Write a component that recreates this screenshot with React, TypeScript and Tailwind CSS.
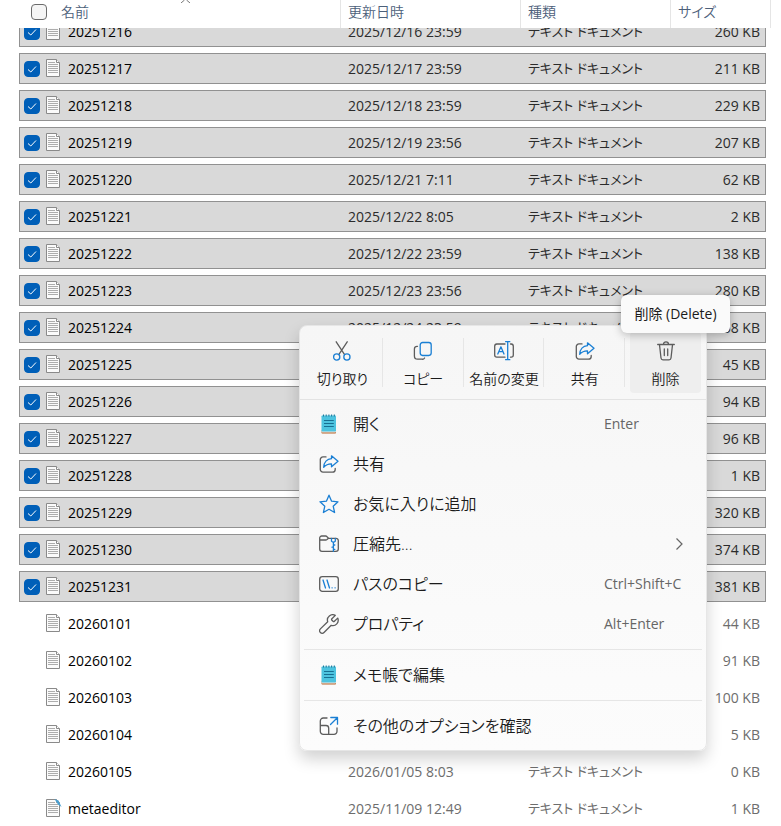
import type { ReactNode } from 'react';

type FileRow = {
  name: string;
  date?: string;
  size: string;
  selected?: boolean;
  script?: boolean;
};

const files: FileRow[] = [
  { name: '20251216', date: '2025/12/16 23:59', size: '260 KB', selected: true },
  { name: '20251217', date: '2025/12/17 23:59', size: '211 KB', selected: true },
  { name: '20251218', date: '2025/12/18 23:59', size: '229 KB', selected: true },
  { name: '20251219', date: '2025/12/19 23:56', size: '207 KB', selected: true },
  { name: '20251220', date: '2025/12/21 7:11', size: '62 KB', selected: true },
  { name: '20251221', date: '2025/12/22 8:05', size: '2 KB', selected: true },
  { name: '20251222', date: '2025/12/22 23:59', size: '138 KB', selected: true },
  { name: '20251223', date: '2025/12/23 23:56', size: '280 KB', selected: true },
  { name: '20251224', date: '2025/12/24 23:59', size: '268 KB', selected: true },
  { name: '20251225', size: '45 KB', selected: true },
  { name: '20251226', size: '94 KB', selected: true },
  { name: '20251227', size: '96 KB', selected: true },
  { name: '20251228', size: '1 KB', selected: true },
  { name: '20251229', size: '320 KB', selected: true },
  { name: '20251230', size: '374 KB', selected: true },
  { name: '20251231', size: '381 KB', selected: true },
  { name: '20260101', size: '44 KB' },
  { name: '20260102', size: '91 KB' },
  { name: '20260103', size: '100 KB' },
  { name: '20260104', size: '5 KB' },
  { name: '20260105', date: '2026/01/05 8:03', size: '0 KB' },
  { name: 'metaeditor', date: '2025/11/09 12:49', size: '1 KB', script: true },
];

const GRAY = '#5c5c5c';
const BLUE = '#1a7fd4';

function Icon({ children }: { children: ReactNode }) {
  return (
    <svg
      className="size-5 shrink-0"
      viewBox="0 0 20 20"
      fill="none"
      stroke={GRAY}
      strokeWidth="1.3"
      strokeLinecap="round"
      strokeLinejoin="round"
      aria-hidden="true"
    >
      {children}
    </svg>
  );
}

function CutIcon() {
  return (
    <Icon>
      <path d="M4.2 0.8 12.6 13.6M15.2 0.8 6.8 13.6" />
      <circle cx="4.7" cy="16" r="3.1" stroke={BLUE} />
      <circle cx="14.9" cy="16" r="3.1" stroke={BLUE} />
    </Icon>
  );
}

function CopyIcon() {
  return (
    <Icon>
      <path d="M4.5 5.3H4A2.6 2.6 0 0 0 1.4 7.9V15A3.2 3.2 0 0 0 4.6 18.2H9A2.6 2.6 0 0 0 11.6 17" />
      <rect x="7.2" y="1.5" width="11" height="13" rx="2.4" stroke={BLUE} />
    </Icon>
  );
}

function RenameIcon() {
  return (
    <Icon>
      <path d="M11 3H2.8A2.2 2.2 0 0 0 .7 5.2V14A2.2 2.2 0 0 0 2.8 16.2H11M16.5 3H17.2A2.2 2.2 0 0 1 19.3 5.2V14A2.2 2.2 0 0 1 17.2 16.2H16.5" />
      <path d="M3.8 13 6.9 5.8 10 13M4.9 10.7H8.9M13.7 .8V18.6M11.6 .7H15.8M11.6 18.7H15.8" stroke={BLUE} />
    </Icon>
  );
}

function ShareIcon() {
  return (
    <Icon>
      <path d="M7 2.9H4A2.7 2.7 0 0 0 1.3 5.6V15.4A2.7 2.7 0 0 0 4 18.1H13.5A2.7 2.7 0 0 0 16.2 15.4V14.4" />
      <path d="M12.5 1.8 19 7.3 12.5 12.8V9.9C9 9.8 6.7 11 4.7 13.2 5 8.5 7.9 5 12.5 4.7Z" stroke={BLUE} />
    </Icon>
  );
}

function TrashIcon() {
  return (
    <Icon>
      <path d="M1.7 3.5H18.3M7.5 3.3A2.5 2.5 0 0 1 12.5 3.3M3.5 3.7 5 17A2 2 0 0 0 7 18.8H13A2 2 0 0 0 15 17L16.5 3.7M8.3 8V14.5M11.7 8V14.5" />
    </Icon>
  );
}

function StarIcon() {
  return (
    <Icon>
      <path d="M10 1.2 12.6 7.2 19 7.8 14.2 12.2 15.6 18.5 10 15.3 4.4 18.5 5.8 12.2 1 7.8 7.4 7.2Z" stroke={BLUE} />
    </Icon>
  );
}

function ZipIcon() {
  return (
    <Icon>
      <path d="M9.5 4.3 7.8 2.5A1.5 1.5 0 0 0 6.7 2H2.7A2 2 0 0 0 .7 4V15A2.3 2.3 0 0 0 3 17.3H17A2.3 2.3 0 0 0 19.3 15V6.6A2.3 2.3 0 0 0 17 4.3H9.5L8 5.6A2 2 0 0 1 6.8 6H.9" />
      <path d="M12.5 4.3V7.3L14.4 8.5 16.3 7.3V4.3M14.4 8.5V17.3M14.4 11H15.8M13 13.2H14.4M14.4 15.4H15.8" stroke={BLUE} />
    </Icon>
  );
}

function PathIcon() {
  return (
    <Icon>
      <rect x=".7" y="2.7" width="18.6" height="14.6" rx="2.6" />
      <path d="M4 6 6.5 14M8 6 10.5 14M13 13.8H13.2M16 13.8H16.2" stroke={BLUE} />
    </Icon>
  );
}

function WrenchIcon() {
  return (
    <Icon>
      <path d="M16.3 1.4A5.3 5.3 0 0 0 8.7 7.7L1.4 14.9A2.5 2.5 0 0 0 5 18.5L12.2 11.3A5.3 5.3 0 0 0 18.7 4.1L15.4 7.3A1 1 0 0 1 14 7.3L12.9 6.2A1 1 0 0 1 12.9 4.8Z" />
    </Icon>
  );
}

function MoreIcon() {
  return (
    <Icon>
      <path d="M8 2H4.3A3 3 0 0 0 1.3 5V15.3A3 3 0 0 0 4.3 18.3H15A3 3 0 0 0 18 15.3V12M1.3 9.5H7A2.7 2.7 0 0 1 9.7 12.2V18.3" />
      <path d="M11.5 8.5 18.3 1.7M11.8 1.5H18.5V8.2" stroke={BLUE} />
    </Icon>
  );
}

function NotepadIcon() {
  return (
    <svg className="size-5 shrink-0" viewBox="0 0 20 20" aria-hidden="true">
      <rect x="2.5" y="16" width="14.5" height="3.5" rx=".8" fill="#b5652b" />
      <rect x="2.5" y="15" width="14.5" height="3.5" rx=".8" fill="#e8e8e8" />
      <rect x="2.5" y="1.5" width="14.5" height="16" rx=".8" fill="#4dc3df" />
      <path d="M4.5 .5V2.5M7.2 .5V2.5M9.9 .5V2.5M12.6 .5V2.5M15.3 .5V2.5" stroke="#1c7a9c" strokeWidth="1.1" />
      <path d="M5 6.5H14.8M5 9.5H14.8M5 12.5H14.8" stroke="#176f92" />
    </svg>
  );
}

function FileIcon({ script }: { script?: boolean }) {
  return (
    <svg className="h-[18px] w-4 shrink-0" viewBox="0 0 16 18" fill="none" aria-hidden="true">
      <path d="M.5 .5H10.5L13.5 3.5V17.5H.5Z" fill="#fbfbfb" stroke="#8a8a8a" />
      <path d="M10.5 .5V3.5H13.5" fill="#fff" stroke="#8a8a8a" />
      <path d="M2 3.5H9M2 5.5H12M2 7.5H12M2 9.5H12M2 11.5H12M2 13.5H12" stroke="#adadad" />
      {script && <path d="M8.5 0 12.5 1.5 15.5 8 12 5.5Z" fill="#4a9fd0" />}
    </svg>
  );
}

function CheckBox({ label, checked }: { label: string; checked?: boolean }) {
  return (
    <span className="relative flex size-4 shrink-0">
      <input
        type="checkbox"
        aria-label={label}
        defaultChecked={checked}
        className="peer size-4 appearance-none rounded-[4px] border border-[#6b6b6b] bg-[#f5f5f5] checked:border-[#005fb8] checked:bg-[#005fb8]"
      />
      <svg
        className="pointer-events-none absolute inset-0 hidden size-4 peer-checked:block"
        viewBox="0 0 16 16"
        fill="none"
        stroke="#fff"
        aria-hidden="true"
      >
        <path d="M4 8.5 6.8 11 12 5.5" />
      </svg>
    </span>
  );
}

function FileTable() {
  return (
    <table className="block pl-[19px] text-sm">
      <thead className="relative z-10 block bg-white pr-[10px]">
        <tr className="grid h-7 grid-cols-[minmax(0,1fr)_180px_150px_101px] text-left text-[#4c607a]">
          <th className="flex items-start gap-3.5 pt-1 pl-3 font-[350]">
            <CheckBox label="すべて選択" />
            <span className="-mt-0.5">名前</span>
          </th>
          <th className="border-l border-[#e5e5e5] pt-0.5 pl-[7px] font-[350]">更新日時</th>
          <th className="border-l border-[#e5e5e5] pt-0.5 pl-[7px] font-[350]">種類</th>
          <th className="border-x border-[#e5e5e5] pt-0.5 pl-[7px] font-[350]">サイズ</th>
        </tr>
      </thead>
      {/* list is scrolled a little, so the first row slides under the header */}
      <tbody className="-mt-3 flex flex-col gap-1.5 pr-[15px]">
        {files.map((file) => (
          <tr
            key={file.name}
            className={`grid h-[31px] grid-cols-[minmax(0,1fr)_180px_150px_96px] items-center border ${
              file.selected
                ? 'border-[#919191] bg-[#d9d9d9] text-[#2b2b2b]'
                : 'border-transparent text-[#6d6d6d]'
            }`}
          >
            <td className="flex items-center pl-1 text-black">
              {file.selected ? <CheckBox label={file.name} checked /> : <span className="size-4" />}
              <span className="mx-1.5 flex pb-0.5">
                <FileIcon script={file.script} />
              </span>
              <span>{file.name}</span>
            </td>
            <td className="pl-[9px]">{file.date}</td>
            <td className="pl-[9px] text-[13px]">{file.date && 'テキスト ドキュメント'}</td>
            <td className="pr-[5px] text-right">{file.size}</td>
          </tr>
        ))}
      </tbody>
    </table>
  );
}

const commands = [
  { label: '切り取り', icon: <CutIcon /> },
  { label: 'コピー', icon: <CopyIcon /> },
  { label: '名前の変更', icon: <RenameIcon /> },
  { label: '共有', icon: <ShareIcon /> },
  { label: '削除', icon: <TrashIcon />, hover: true },
];

function MenuItem({ icon, label, shortcut, arrow }: { icon: ReactNode; label: string; shortcut?: string; arrow?: boolean }) {
  return (
    <button type="button" className="flex h-10 w-full items-center px-[19px] text-left">
      {icon}
      <span className="ml-3.5 flex-1 text-base font-[350] text-[#1b1b1b]">{label}</span>
      {shortcut && <span className="w-[83px] text-sm whitespace-nowrap text-[#666]">{shortcut}</span>}
      {arrow && (
        <svg className="size-4" viewBox="0 0 16 16" fill="none" stroke="#666" strokeWidth="1.2" aria-hidden="true">
          <path d="M5.5 2.5 11 8 5.5 13.5" />
        </svg>
      )}
    </button>
  );
}

function ContextMenu() {
  return (
    <div className="absolute top-[325px] left-[299px] z-20 w-[408px] rounded-lg border border-[#e6e6e6] bg-linear-to-b from-[#f6f6f6] to-[#fcfcfc] shadow-[0_8px_16px_rgba(0,0,0,0.18)]">
      <div className="grid grid-cols-5 border-b border-[#e3e3e3] py-1.5 pl-0.5">
        {commands.map((command) => (
          <div key={command.label} className="relative px-[5px]">
            <button
              type="button"
              className={`flex h-[61px] w-full flex-col items-center gap-2 rounded pt-[9px] text-[#1b1b1b] ${
                command.hover ? 'bg-[#eeeeee]' : ''
              }`}
            >
              {command.icon}
              <span className="text-sm font-[350] whitespace-nowrap">{command.label}</span>
            </button>
            {!command.hover && <span className="absolute inset-y-1.5 right-0 w-px bg-[#e6e6e6]" />}
          </div>
        ))}
      </div>
      <div className="pt-1">
        <MenuItem icon={<NotepadIcon />} label="開く" shortcut="Enter" />
        <MenuItem icon={<ShareIcon />} label="共有" />
        <MenuItem icon={<StarIcon />} label="お気に入りに追加" />
        <MenuItem icon={<ZipIcon />} label="圧縮先..." arrow />
        <MenuItem icon={<PathIcon />} label="パスのコピー" shortcut="Ctrl+Shift+C" />
        <MenuItem icon={<WrenchIcon />} label="プロパティ" shortcut="Alt+Enter" />
      </div>
      <hr className="mx-1 my-[5px] border-[#e6e6e6]" />
      <MenuItem icon={<NotepadIcon />} label="メモ帳で編集" />
      <hr className="mx-1 my-[5px] border-[#e6e6e6]" />
      <MenuItem icon={<MoreIcon />} label="その他のオプションを確認" />
      <div className="h-1" />
    </div>
  );
}

export default function App() {
  return (
    <main className="relative h-screen overflow-hidden bg-white font-['Open_Sans','Noto_Sans_CJK_JP',sans-serif] [font-feature-settings:'palt']" lang="ja">
      <FileTable />
      <svg className="absolute top-0 left-[180px] z-10 h-[3px] w-3" viewBox="0 0 12 3" fill="none" stroke="#777" aria-hidden="true">
        <path d="M1 3 4.5 0M10 3 6.5 0" />
      </svg>
      <ContextMenu />
      <div role="tooltip" className="absolute top-[295px] left-[621px] z-30 flex h-[38px] w-[109px] items-center justify-center rounded-md bg-[#fafafa] text-sm whitespace-nowrap text-[#1b1b1b] shadow-[0_2px_8px_rgba(0,0,0,0.25)]">
        削除 (Delete)
      </div>
    </main>
  );
}
